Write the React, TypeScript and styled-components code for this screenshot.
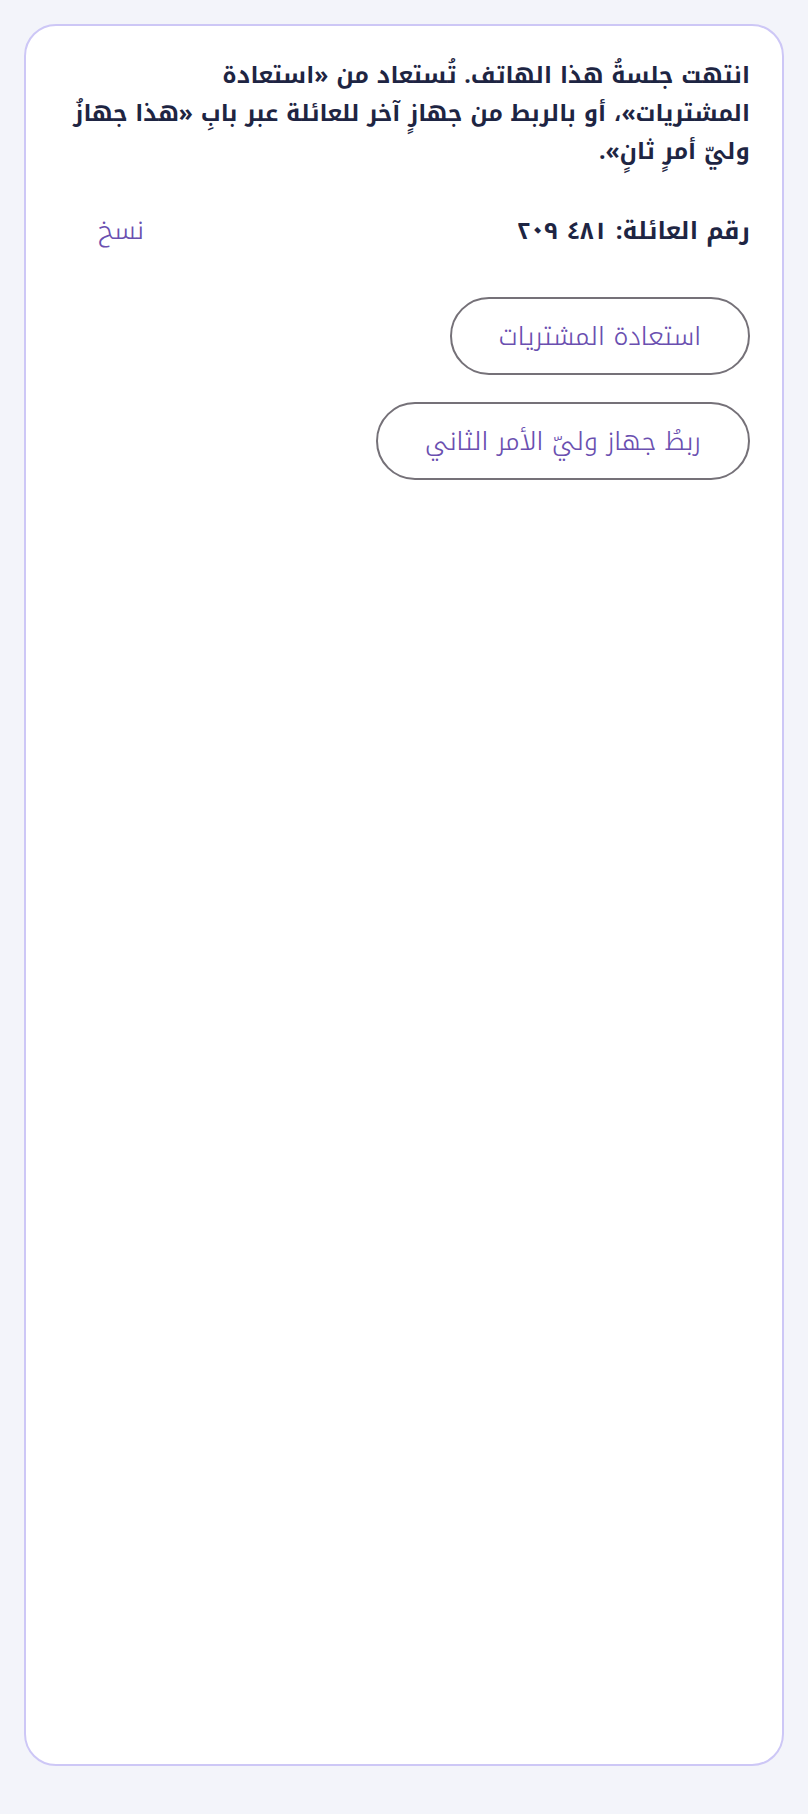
import styled, { createGlobalStyle } from "styled-components"

const GlobalStyle = createGlobalStyle`
	html, body {
		margin: 0;
		padding: 0;
		background: #f3f4fa;
	}
	body {
		font-family: "Noto Kufi Arabic", "Noto Sans Arabic", "DejaVu Sans", sans-serif;
	}
	* {
		box-sizing: border-box;
	}
`

const Page = styled.div`
	min-height: 1814px;
	padding: 24px;
	display: flex;
	flex-direction: column;
`

const Card = styled.main`
	height: 1742px;
	background: #ffffff;
	border: 2px solid #cdc7f6;
	border-radius: 32px;
	padding: 31px 32px 32px;
	display: flex;
	flex-direction: column;
`

const Message = styled.p`
	margin: 0;
	font-size: 23px;
	line-height: 38px;
	font-weight: 700;
	color: #1e2543;
`

const FamilyRow = styled.div`
	margin-top: 35px;
	display: flex;
	align-items: center;
	justify-content: space-between;
`

const FamilyLabel = styled.span`
	font-size: 24px;
	font-weight: 700;
	color: #1e2543;
`

const CopyButton = styled.button`
	font: inherit;
	font-size: 26px;
	font-weight: 300;
	color: #6a4fb0;
	background: none;
	border: none;
	padding: 0;
	margin-left: 40px;
	cursor: pointer;
`

const Actions = styled.div`
	margin-top: 42px;
	display: flex;
	flex-direction: column;
	align-items: flex-start;
	gap: 27px;
`

const PillButton = styled.button`
	font: inherit;
	font-size: 25.5px;
	font-weight: 300;
	color: #6a4fb0;
	background: #ffffff;
	border: 2px solid #757178;
	border-radius: 999px;
	height: 78px;
	padding: 0 47px;
	cursor: pointer;
`

export default function App() {
	return (
		<>
			<GlobalStyle />
			<Page dir="rtl" lang="ar">
				<Card>
					<Message>
						انتهت جلسةُ هذا الهاتف. تُستعاد من «استعادة
						<br />
						المشتريات»، أو بالربط من جهازٍ آخر للعائلة عبر بابِ «هذا جهازُ
						<br />
						وليّ أمرٍ ثانٍ».
					</Message>
					<FamilyRow>
						<FamilyLabel>رقم العائلة: ٤٨١ ٢٠٩</FamilyLabel>
						<CopyButton type="button">نسخ</CopyButton>
					</FamilyRow>
					<Actions>
						<PillButton type="button">استعادة المشتريات</PillButton>
						<PillButton type="button">ربطُ جهاز وليّ الأمر الثاني</PillButton>
					</Actions>
				</Card>
			</Page>
		</>
	)
}
